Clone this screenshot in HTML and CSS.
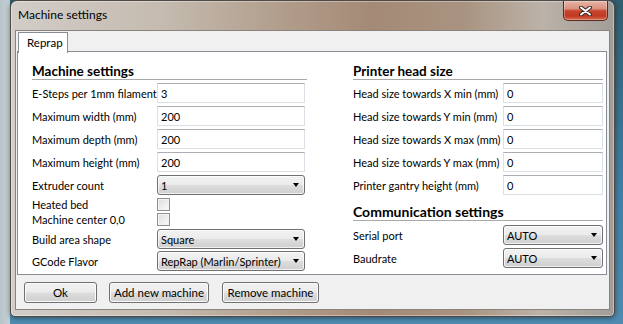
FILE: index.html
```html
<!DOCTYPE html>
<html lang="en">
<head>
    <meta charset="UTF-8">
    <title>Machine settings</title>
    <link rel="stylesheet" href="styles.css">
</head>
<body>
    <div class="window">
        <div class="titlebar">
            <span class="title">Machine settings</span>
            <div class="close">
                <svg width="13" height="10" viewBox="0 0 13 10">
                    <path d="M2 1.5 L11 8.5 M11 1.5 L2 8.5" stroke="#3b2a26" stroke-width="4" stroke-linecap="round"/>
                    <path d="M2 1.5 L11 8.5 M11 1.5 L2 8.5" stroke="#fff" stroke-width="2" stroke-linecap="round"/>
                </svg>
            </div>
        </div>
        <div class="client">
            <div class="tabs">
                <div class="tab">Reprap</div>
            </div>
            <div class="panel">
                <!-- left column -->
                <div class="col">
                    <h3>Machine settings</h3>
                    <div class="row"><span class="label">E-Steps per 1mm filament</span><input class="field" value="3" readonly></div>
                    <div class="row"><span class="label">Maximum width (mm)</span><input class="field" value="200" readonly></div>
                    <div class="row"><span class="label">Maximum depth (mm)</span><input class="field" value="200" readonly></div>
                    <div class="row"><span class="label">Maximum height (mm)</span><input class="field" value="200" readonly></div>
                    <div class="row"><span class="label">Extruder count</span><div class="combo"><span>1</span><i class="arrow"></i></div></div>
                    <div class="row check gap2"><span class="label">Heated bed</span><span class="box"></span></div>
                    <div class="row check"><span class="label">Machine center 0,0</span><span class="box"></span></div>
                    <div class="row gap2"><span class="label">Build area shape</span><div class="combo"><span>Square</span><i class="arrow"></i></div></div>
                    <div class="row"><span class="label">GCode Flavor</span><div class="combo"><span>RepRap (Marlin/Sprinter)</span><i class="arrow"></i></div></div>
                </div>
                <!-- right column -->
                <div class="col wide">
                    <h3>Printer head size</h3>
                    <div class="row"><span class="label">Head size towards X min (mm)</span><input class="field" value="0" readonly></div>
                    <div class="row"><span class="label">Head size towards Y min (mm)</span><input class="field" value="0" readonly></div>
                    <div class="row"><span class="label">Head size towards X max (mm)</span><input class="field" value="0" readonly></div>
                    <div class="row"><span class="label">Head size towards Y max (mm)</span><input class="field" value="0" readonly></div>
                    <div class="row"><span class="label">Printer gantry height (mm)</span><input class="field" value="0" readonly></div>
                    <h3 class="second">Communication settings</h3>
                    <div class="row"><span class="label">Serial port</span><div class="combo"><span>AUTO</span><i class="arrow"></i></div></div>
                    <div class="row"><span class="label">Baudrate</span><div class="combo"><span>AUTO</span><i class="arrow"></i></div></div>
                </div>
            </div>
            <div class="buttons">
                <button class="btn btn-ok">Ok</button>
                <button class="btn btn-add">Add new machine</button>
                <button class="btn btn-remove">Remove machine</button>
            </div>
        </div>
    </div>
</body>
</html>
```

FILE: styles.css
```css
* {
    box-sizing: border-box;
}

body {
    margin: 0;
    width: 623px;
    height: 324px;
    overflow: hidden;
    font-family: Lato, "Segoe UI", sans-serif;
    font-size: 11px;
    color: #000;
    background: linear-gradient(to right, #b7c5cb 0, #c6d0d3 10px, transparent 10px),
                linear-gradient(to bottom, #2f5f70 0, #417fa6 60%, #4f8bb0 100%);
}

/* aero window frame */
.window {
    margin-left: 10px;
    width: 605px;
    height: 317px;
    border: 1px solid #4f4a45;
    border-radius: 7px 7px 5px 5px;
    background: linear-gradient(to right, #d2cdc8 0%, #c5bbb0 25%, #b19d8b 45%, #a48a76 60%, #a99380 75%, #bcb2a8 88%, #a19d98 100%);
    box-shadow: inset 0 0 0 1px rgba(255, 255, 255, 0.35), 0 1px 5px rgba(0, 0, 0, 0.45);
    display: flex;
    flex-direction: column;
}

.titlebar {
    height: 29px;
    display: flex;
    align-items: flex-start;
}

.title {
    padding: 6px 0 0 7px;
    line-height: 16px;
    font-size: 12px;
}

.close {
    margin-left: auto;
    margin-right: 6px;
    width: 45px;
    height: 20px;
    border: 1px solid #5a2a20;
    border-top: none;
    border-radius: 0 0 5px 5px;
    background: linear-gradient(#e6b5a7 0%, #dc917f 40%, #c8452d 52%, #c13a22 78%, #d8684e 100%);
    box-shadow: inset 0 0 0 1px rgba(255, 255, 255, 0.3);
    display: flex;
    align-items: center;
    justify-content: center;
}

.client {
    margin: 0 4px;
    width: 595px;
    height: 280px;
    border: 1px solid #8a847e;
    background-color: #f0f0f0;
}

/* tab strip */
.tabs {
    display: flex;
    padding: 1px 0 0 2px;
    height: 20px;
}

.tab {
    position: relative;
    z-index: 1;
    height: 21px;
    width: 50px;
    padding-left: 8px;
    line-height: 19px;
    font-size: 11.5px;
    border: 1px solid #898c95;
    border-bottom: none;
    background-color: #fff;
}

.panel {
    margin-left: 1px;
    width: 590px;
    height: 224px;
    border: 1px solid #898c95;
    background-color: #fff;
    padding: 11px 2px 0 14px;
    display: grid;
    grid-template-columns: 275px 250px;
    column-gap: 46px;
    align-items: start;
}

h3 {
    margin: 0 0 3px;
    font-size: 13.5px;
    line-height: 16px;
    font-weight: bold;
    border-bottom: 1px solid #a9a9a9;
}

h3.second {
    margin-top: 9px;
    margin-bottom: 4px;
    font-size: 14px;
}

.row {
    display: flex;
    align-items: center;
    height: 20px;
    margin-bottom: 3px;
}

.row.check {
    height: 13px;
}

.row.gap2 {
    margin-bottom: 2px;
}

.label {
    width: 125px;
    flex-shrink: 0;
    white-space: nowrap;
}

.wide .label {
    width: 150px;
}

.field {
    width: 148px;
    height: 20px;
    margin: 0;
    padding: 0 3px;
    border: 1px solid #dbdfe6;
    border-top-color: #abadb3;
    font: inherit;
    color: #000;
    outline: none;
}

.wide .field {
    width: 100px;
}

.combo {
    width: 148px;
    height: 20px;
    padding-left: 3px;
    border: 1px solid #707070;
    border-radius: 3px;
    background: linear-gradient(#f2f2f2 0%, #ebebeb 48%, #dddddd 52%, #cfcfcf 100%);
    box-shadow: inset 0 0 0 1px rgba(255, 255, 255, 0.7);
    display: flex;
    align-items: center;
}

.wide .combo {
    width: 100px;
}

.arrow {
    margin-left: auto;
    margin-right: 5px;
    width: 0;
    height: 0;
    border-left: 3.5px solid transparent;
    border-right: 3.5px solid transparent;
    border-top: 4px solid #000;
}

.box {
    width: 13px;
    height: 13px;
    border: 1px solid #8f8f8f;
    background: linear-gradient(135deg, #dcdcdc, #fbfbfb);
    box-shadow: inset 0 0 0 1px #f4f4f4;
}

/* bottom buttons */
.buttons {
    display: flex;
    padding: 7px 0 0 8px;
}

.btn {
    height: 21px;
    margin: 0;
    padding: 0;
    border: 1px solid #707070;
    border-radius: 3px;
    background: linear-gradient(#f2f2f2 0%, #ebebeb 48%, #dddddd 52%, #cfcfcf 100%);
    box-shadow: inset 0 0 0 1px #fbfbfb;
    font: inherit;
    font-size: 11.5px;
    color: #000;
}

.btn-ok {
    width: 73px;
}

.btn-add {
    width: 100px;
    margin-left: 12px;
}

.btn-remove {
    width: 97px;
    margin-left: 13px;
}
```
